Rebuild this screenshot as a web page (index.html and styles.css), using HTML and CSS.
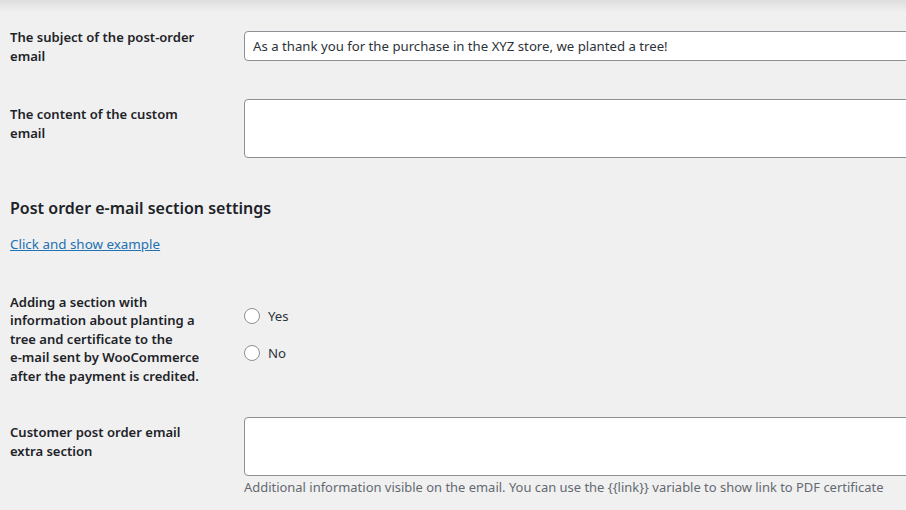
FILE: index.html
```html
<!DOCTYPE html>
<html lang="en">
<head>
<meta charset="utf-8">
<title>Settings</title>
<link rel="stylesheet" href="styles.css">
</head>
<body>
<div class="page">
  <div class="row row-subject">
    <label class="label" for="subject">The subject of the <span class="nowrap">post-order</span> email</label>
    <div class="field">
      <input id="subject" class="input" type="text" value="As a thank you for the purchase in the XYZ store, we planted a tree!">
    </div>
  </div>

  <div class="row row-content">
    <label class="label" for="content">The content of the custom email</label>
    <div class="field">
      <textarea id="content" class="textarea"></textarea>
    </div>
  </div>

  <h2 class="heading">Post order e-mail section settings</h2>
  <p class="link-line"><a class="link" href="#">Click and show example</a></p>

  <div class="row row-radio">
    <div class="label">Adding a section with information about planting a tree and certificate to the <span class="nowrap">e-mail</span> sent by WooCommerce after the payment is credited.</div>
    <div class="field radios">
      <label class="option"><span class="radio"></span><span>Yes</span></label>
      <label class="option"><span class="radio"></span><span>No</span></label>
    </div>
  </div>

  <div class="row row-extra">
    <label class="label" for="extra">Customer post order email extra section</label>
    <div class="field">
      <textarea id="extra" class="textarea"></textarea>
      <p class="description">Additional information visible on the email. You can use the {{link}} variable to show link to PDF certificate</p>
    </div>
  </div>
</div>
</body>
</html>
```
FILE: styles.css
```css
html, body {
  margin: 0;
  padding: 0;
  overflow: hidden;
}
body {
  background: linear-gradient(#dedede 0px, #f0f0f1 12px) no-repeat, #f0f0f1;
  font-family: "Noto Sans", "Open Sans", sans-serif;
  font-size: 13.2px;
  color: #1d2327;
  width: 906px;
  height: 510px;
}
.page {
  padding: 28px 0 0 10px;
}
.row {
  display: grid;
  grid-template-columns: 234px 700px;
  align-items: start;
}
.label {
  display: block;
  max-width: 196px;
  font-size: 13.05px;
  font-weight: 600;
  line-height: 18.5px;
}
.nowrap {
  white-space: nowrap;
}
.field {
  min-width: 0;
}
.input {
  box-sizing: border-box;
  display: block;
  width: 700px;
  height: 30px;
  margin-top: 3px;
  padding: 0 8px;
  border: 1px solid #8c8f94;
  border-radius: 4px;
  background: #fff;
  font-family: inherit;
  font-size: 13.2px;
  color: #2c3338;
  outline: none;
}
.textarea {
  box-sizing: border-box;
  display: block;
  width: 700px;
  height: 59px;
  border: 1px solid #8c8f94;
  border-radius: 4px;
  background: #fff;
  resize: none;
  outline: none;
  margin: 0;
}
.row-content {
  margin-top: 34px;
}
.row-content .label,
.row-extra .label {
  padding-top: 6px;
}
.heading {
  margin: 39px 0 0;
  font-size: 16px;
  line-height: 23px;
  font-weight: 600;
}
.link-line {
  margin: 15px 0 0;
  line-height: 18.5px;
  font-size: 13.4px;
}
.link {
  color: #2271b1;
  text-decoration: underline;
}
.row-radio {
  margin-top: 39px;
}
.radios {
  display: flex;
  flex-direction: column;
  gap: 18.5px;
  padding-top: 14px;
}
.option {
  display: flex;
  align-items: center;
  gap: 8px;
  line-height: 18.5px;
  color: #2c3338;
}
.radio {
  box-sizing: border-box;
  width: 16px;
  height: 16px;
  border: 1px solid #8c8f94;
  border-radius: 50%;
  background: #fff;
}
.row-extra {
  margin-top: 32px;
}
.description {
  margin: 2px 0 0;
  font-size: 12.95px;
  color: #646970;
  line-height: 18.5px;
}
```
